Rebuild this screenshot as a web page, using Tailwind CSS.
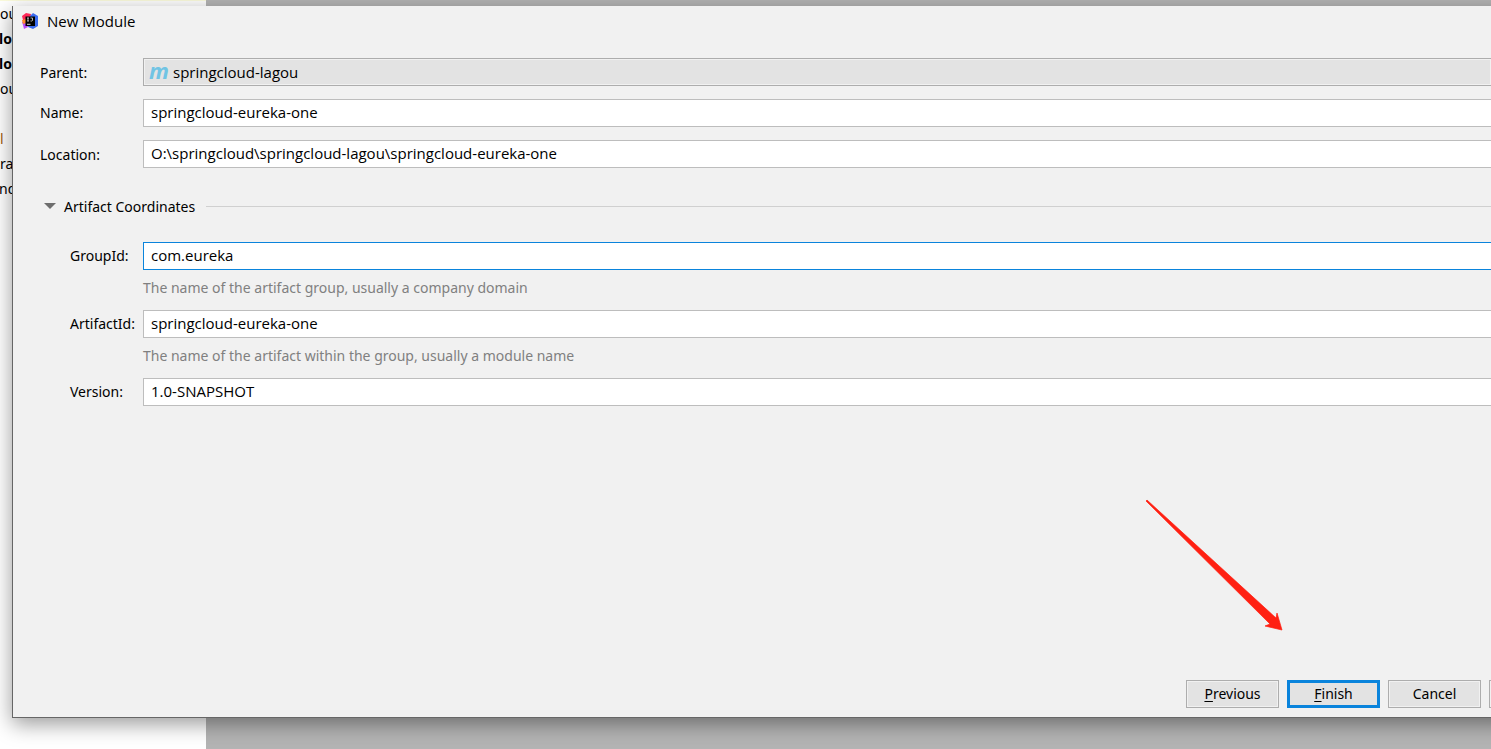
<!DOCTYPE html>
<html lang="en">
<head>
<meta charset="utf-8">
<title>New Module</title>
<script src="https://cdn.jsdelivr.net/npm/@tailwindcss/browser@4"></script>
</head>
<body class="relative h-screen overflow-hidden bg-[#b4b4b4] font-['Noto_Sans',sans-serif] text-[14px] text-black">
  <div class="h-full w-[206px] overflow-hidden bg-white">
    <div class="h-px bg-[#fbfbdc]"></div>
    <div class="whitespace-nowrap text-[14px] leading-[25px]">
      <p>ou</p>
      <p class="-ml-px font-bold">lou</p>
      <p class="-ml-px font-bold">lou</p>
      <p>ou</p>
      <p>&nbsp;</p>
      <p class="text-[#a05a10]">l</p>
      <p>ra</p>
      <p class="-ml-px">nd</p>
    </div>
  </div>

  <main class="absolute top-[6px] -right-[40px] bottom-[31px] left-[12px] flex flex-col border-b border-l border-[#666] bg-[#f1f1f1] pr-[40px] shadow-[0_6px_20px_rgba(0,0,0,0.4)]">
    <header class="flex h-[30px] items-center gap-[9px] pl-[9px]">
      <svg class="size-[16px]" viewBox="0 0 16 16" aria-hidden="true">
        <path d="M0 3 4 0l5 1-1 9-6 1z" fill="#fe2857"/>
        <path d="M0 9 4 7l2 7-4 2-1-4z" fill="#b74af7"/>
        <path d="M0 7 4 6v4l-3 1z" fill="#ff8a2a"/>
        <path d="M8 3 11 0l5 3v10l-5 3-5-2z" fill="#3b6cf0"/>
        <path d="M3.500 3.500h9.500v9.500H3.500z" fill="#000"/>
        <path d="M5 5h2M6 5v3M5 8h2M8.500 5h2v2.500l-.6.500H8.500" fill="none" stroke="#ddd" stroke-width=".8"/>
        <path d="M5 11.300h3.500" stroke="#fff" stroke-width=".8"/>
      </svg>
      <h1 class="font-['Open_Sans',sans-serif] text-[15px]">New Module</h1>
    </header>

    <form id="module" class="flex flex-1 flex-col pt-[22px] pl-[27px]">
      <div class="flex flex-col gap-[13px]">
        <div class="flex h-[28px] items-center">
          <label for="parent" class="w-[103px]">Parent:</label>
          <div class="relative h-full flex-1">
            <select id="parent" class="h-full w-full appearance-none border border-r-0 border-[#adadad] bg-[#e3e3e3] pl-[29px] font-['Open_Sans',sans-serif] text-[15px] outline-none ring-1 ring-inset ring-[#f1f1f1]"><option>springcloud-lagou</option></select>
            <span class="pointer-events-none absolute top-0 left-[6px] text-[22px] leading-[24px] font-bold italic text-[#70c4e4]" aria-hidden="true">m</span>
          </div>
        </div>
        <div class="flex h-[28px] items-center">
          <label for="name" class="w-[103px] pb-[2px]">Name:</label>
          <input id="name" value="springcloud-eureka-one" class="h-full flex-1 border border-r-0 border-[#bdbdbd] bg-white px-[7px] pb-[2px] font-['Open_Sans',sans-serif] text-[15px] outline-none">
        </div>
        <div class="flex h-[28px] items-center">
          <label for="location" class="w-[103px]">Location:</label>
          <input id="location" value="O:\springcloud\springcloud-lagou\springcloud-eureka-one" class="h-full flex-1 border border-r-0 border-[#bdbdbd] bg-white px-[7px] pb-[2px] font-['Open_Sans',sans-serif] text-[15px] outline-none">
        </div>
      </div>

      <button type="button" class="mt-[24px] flex h-[28px] items-center text-left" aria-expanded="true">
        <svg class="mr-[8px] ml-[4px] h-[6px] w-[12px]" viewBox="0 0 12 6" aria-hidden="true"><path d="M0 0h12L6 6z" fill="#6e6e6e"/></svg>
        Artifact Coordinates
        <span class="ml-[11px] h-px flex-1 bg-[#d0d0d0]"></span>
      </button>

      <div class="mt-[22px] flex flex-col pl-[30px]">
        <div class="flex h-[28px] items-center">
          <label for="group" class="w-[73px] pb-[2px]">GroupId:</label>
          <input id="group" value="com.eureka" class="h-full flex-1 border border-r-0 border-[#0a84dc] bg-white px-[7px] pb-[2px] font-['Open_Sans',sans-serif] text-[15px] outline-none">
        </div>
        <p class="h-[40px] pl-[73px] leading-[36px] text-[#808080]">The name of the artifact group, usually a company domain</p>
        <div class="flex h-[28px] items-center">
          <label for="artifact" class="w-[73px] pb-[2px]">ArtifactId:</label>
          <input id="artifact" value="springcloud-eureka-one" class="h-full flex-1 border border-r-0 border-[#bdbdbd] bg-white px-[7px] pb-[2px] font-['Open_Sans',sans-serif] text-[15px] outline-none">
        </div>
        <p class="h-[40px] pl-[73px] leading-[36px] text-[#808080]">The name of the artifact within the group, usually a module name</p>
        <div class="flex h-[28px] items-center">
          <label for="version" class="w-[73px] pb-[2px]">Version:</label>
          <input id="version" value="1.0-SNAPSHOT" class="h-full flex-1 border border-r-0 border-[#bdbdbd] bg-white px-[7px] pb-[2px] font-['Open_Sans',sans-serif] text-[15px] outline-none">
        </div>
      </div>
    </form>

    <footer class="flex justify-end gap-[8px] pb-[9px]">
      <button class="h-[28px] w-[93px] border border-[#adadad] bg-[#e3e3e3] pb-[2px] ring-1 ring-inset ring-[#f1f1f1]"><span class="underline underline-offset-2">P</span>revious</button>
      <button form="module" class="h-[28px] w-[93px] border-3 border-[#0a84dc] bg-[#e3e3e3] pb-[2px]"><span class="underline underline-offset-2">F</span>inish</button>
      <button class="h-[28px] w-[93px] border border-[#adadad] bg-[#e3e3e3] pb-[2px] ring-1 ring-inset ring-[#f1f1f1]">Cancel</button>
      <button class="h-[28px] w-[2px] border border-r-0 border-[#adadad] bg-[#f1f1f1]" aria-label="Help"></button>
    </footer>
  </main>

  <svg class="pointer-events-none absolute right-[208px] bottom-[118px] h-[132px] w-[138px]" viewBox="0 0 138 132" aria-hidden="true">
    <path d="M1 2 125 125 120 127 137 131 132 114 131 119 2 1Z" fill="#ff2012" stroke="#ff2012" stroke-width=".7"/>
  </svg>
</body>
</html>
